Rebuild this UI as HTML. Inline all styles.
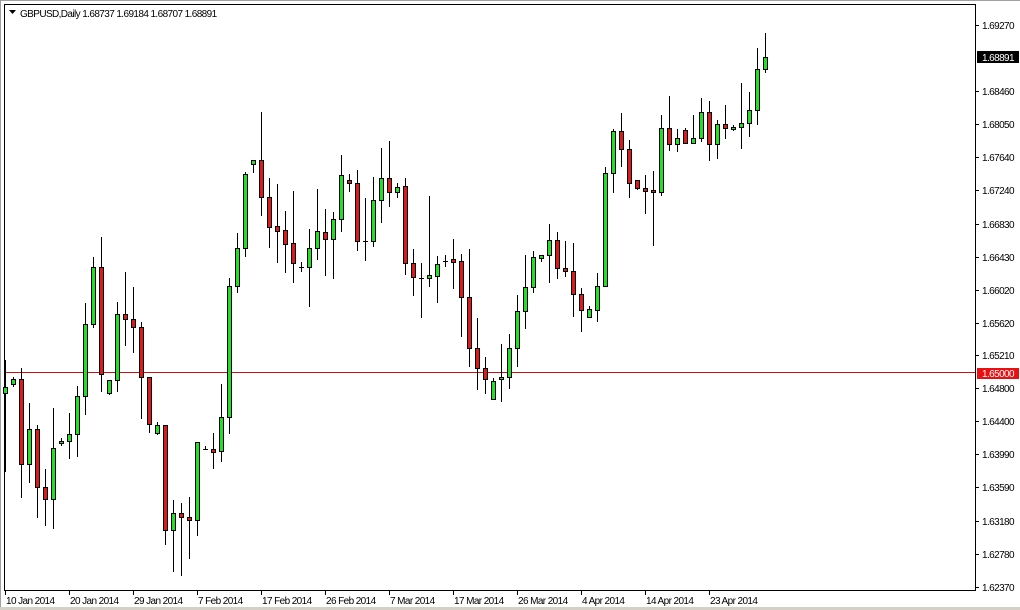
<!DOCTYPE html>
<html><head><meta charset="utf-8"><style>
html,body{margin:0;padding:0;background:#fff;width:1020px;height:610px;overflow:hidden}
svg{display:block}
text{font-family:"Liberation Sans","DejaVu Sans",sans-serif;font-size:10px;fill:#000;letter-spacing:-0.6px}
</style></head><body>
<svg width="1020" height="610" viewBox="0 0 1020 610" xmlns="http://www.w3.org/2000/svg" shape-rendering="crispEdges">
<rect x="0" y="0" width="1020" height="610" fill="#fff"/>
<rect x="0" y="0" width="1020" height="1" fill="#a0a0a0"/>
<rect x="0" y="0" width="1" height="610" fill="#a0a0a0"/>
<rect x="0" y="607" width="1020" height="3" fill="#d4d0c8"/>
<rect x="4.5" y="4.5" width="971" height="586" fill="none" stroke="#000"/>
<path d="M9 10h7l-3.5 4z" fill="#000" shape-rendering="auto"/>
<text x="20" y="17">GBPUSD,Daily  1.68737 1.69184 1.68707 1.68891</text>
<line x1="5" y1="372.5" x2="975" y2="372.5" stroke="#d01010"/>
<g stroke="#000" fill="none">
<path d="M5.5 360V472M13.5 377V387M21.5 368V498M29.5 403V483M37.5 425V518M45.5 469V526M53.5 408V529M61.5 438V446M69.5 413V459M77.5 386V457M85.5 303V415M93.5 257V328M101.5 237V392M109.5 380V395M117.5 302V392M125.5 272V346M133.5 287V353M141.5 322V419M149.5 377V433M157.5 422V435M165.5 425V545M173.5 500V572M181.5 503V576M189.5 497V559M197.5 442V536M205.5 446V449M213.5 433V469M221.5 384V462M229.5 278V434M237.5 233V293M245.5 172V257M253.5 160V173M261.5 112V216M269.5 178V248M277.5 184V263M285.5 211V273M293.5 191V283M301.5 262V272M309.5 229V307M317.5 189V260M325.5 209V276M333.5 212V279M341.5 155V232M349.5 174V192M357.5 170V251M365.5 198V261M373.5 177V247M381.5 148V223M389.5 141V207M397.5 183V198M405.5 178V275M413.5 249V296M421.5 263V318M429.5 196V287M437.5 256V303M445.5 255V267M453.5 239V289M461.5 254V337M469.5 249V367M477.5 318V390M485.5 357V394M493.5 378V399M501.5 344V402M509.5 334V389M517.5 295V367M525.5 255V329M533.5 251V293M541.5 255V262M549.5 224V283M557.5 232V279M565.5 241V277M573.5 243V317M581.5 288V332M589.5 306V318M597.5 273V322M605.5 167V286M613.5 129V193M621.5 113V167M629.5 140V198M637.5 180V190M645.5 175V214M653.5 171V246M661.5 115V196M669.5 96V151M677.5 129V152M685.5 128V144M693.5 115V143M701.5 98V142M709.5 101V161M717.5 120V159M725.5 105V139M733.5 125V131M741.5 83V149M749.5 92V137M757.5 48V125M765.5 33V73"/>
<path d="M203 449.5h5M299 267.5h5M363 241.5h5M419 278.5h5M443 261.5h5"/>
</g>
<g stroke="#000" fill="#22e022">
<rect x="3.5" y="387.5" width="4" height="6"/>
<rect x="11.5" y="379.5" width="4" height="5"/>
<rect x="27.5" y="429.5" width="4" height="35"/>
<rect x="51.5" y="448.5" width="4" height="51"/>
<rect x="59.5" y="441.5" width="4" height="2"/>
<rect x="67.5" y="434.5" width="4" height="7"/>
<rect x="75.5" y="396.5" width="4" height="38"/>
<rect x="83.5" y="324.5" width="4" height="72"/>
<rect x="91.5" y="267.5" width="4" height="57"/>
<rect x="107.5" y="380.5" width="4" height="13"/>
<rect x="115.5" y="314.5" width="4" height="66"/>
<rect x="155.5" y="425.5" width="4" height="8"/>
<rect x="171.5" y="513.5" width="4" height="17"/>
<rect x="195.5" y="442.5" width="4" height="78"/>
<rect x="219.5" y="417.5" width="4" height="34"/>
<rect x="227.5" y="286.5" width="4" height="131"/>
<rect x="235.5" y="248.5" width="4" height="38"/>
<rect x="243.5" y="174.5" width="4" height="74"/>
<rect x="251.5" y="160.5" width="4" height="4"/>
<rect x="307.5" y="248.5" width="4" height="19"/>
<rect x="315.5" y="231.5" width="4" height="17"/>
<rect x="331.5" y="219.5" width="4" height="20"/>
<rect x="339.5" y="175.5" width="4" height="44"/>
<rect x="371.5" y="200.5" width="4" height="41"/>
<rect x="379.5" y="178.5" width="4" height="22"/>
<rect x="395.5" y="187.5" width="4" height="5"/>
<rect x="427.5" y="275.5" width="4" height="3"/>
<rect x="435.5" y="264.5" width="4" height="12"/>
<rect x="491.5" y="381.5" width="4" height="18"/>
<rect x="499.5" y="377.5" width="4" height="2"/>
<rect x="507.5" y="348.5" width="4" height="29"/>
<rect x="515.5" y="311.5" width="4" height="37"/>
<rect x="523.5" y="287.5" width="4" height="24"/>
<rect x="531.5" y="257.5" width="4" height="30"/>
<rect x="539.5" y="255.5" width="4" height="3"/>
<rect x="547.5" y="240.5" width="4" height="15"/>
<rect x="587.5" y="309.5" width="4" height="8"/>
<rect x="595.5" y="286.5" width="4" height="24"/>
<rect x="603.5" y="173.5" width="4" height="113"/>
<rect x="611.5" y="131.5" width="4" height="42"/>
<rect x="659.5" y="128.5" width="4" height="64"/>
<rect x="675.5" y="138.5" width="4" height="6"/>
<rect x="691.5" y="138.5" width="4" height="5"/>
<rect x="699.5" y="112.5" width="4" height="26"/>
<rect x="715.5" y="124.5" width="4" height="20"/>
<rect x="731.5" y="127.5" width="4" height="2"/>
<rect x="739.5" y="123.5" width="4" height="4"/>
<rect x="747.5" y="110.5" width="4" height="13"/>
<rect x="755.5" y="69.5" width="4" height="41"/>
<rect x="763.5" y="57.5" width="4" height="12"/>
</g>
<g stroke="#000" fill="#dd1a1a">
<rect x="19.5" y="379.5" width="4" height="85"/>
<rect x="35.5" y="429.5" width="4" height="58"/>
<rect x="43.5" y="487.5" width="4" height="12"/>
<rect x="99.5" y="267.5" width="4" height="107"/>
<rect x="123.5" y="314.5" width="4" height="5"/>
<rect x="131.5" y="319.5" width="4" height="8"/>
<rect x="139.5" y="327.5" width="4" height="50"/>
<rect x="147.5" y="377.5" width="4" height="47"/>
<rect x="163.5" y="425.5" width="4" height="105"/>
<rect x="179.5" y="513.5" width="4" height="4"/>
<rect x="187.5" y="517.5" width="4" height="3"/>
<rect x="211.5" y="449.5" width="4" height="3"/>
<rect x="259.5" y="160.5" width="4" height="37"/>
<rect x="267.5" y="197.5" width="4" height="30"/>
<rect x="275.5" y="226.5" width="4" height="5"/>
<rect x="283.5" y="230.5" width="4" height="14"/>
<rect x="291.5" y="243.5" width="4" height="20"/>
<rect x="323.5" y="232.5" width="4" height="7"/>
<rect x="347.5" y="180.5" width="4" height="3"/>
<rect x="355.5" y="183.5" width="4" height="58"/>
<rect x="387.5" y="178.5" width="4" height="14"/>
<rect x="403.5" y="186.5" width="4" height="77"/>
<rect x="411.5" y="263.5" width="4" height="14"/>
<rect x="451.5" y="259.5" width="4" height="3"/>
<rect x="459.5" y="261.5" width="4" height="36"/>
<rect x="467.5" y="297.5" width="4" height="51"/>
<rect x="475.5" y="348.5" width="4" height="20"/>
<rect x="483.5" y="368.5" width="4" height="11"/>
<rect x="555.5" y="240.5" width="4" height="28"/>
<rect x="563.5" y="268.5" width="4" height="3"/>
<rect x="571.5" y="271.5" width="4" height="23"/>
<rect x="579.5" y="294.5" width="4" height="16"/>
<rect x="619.5" y="131.5" width="4" height="18"/>
<rect x="627.5" y="149.5" width="4" height="34"/>
<rect x="635.5" y="180.5" width="4" height="8"/>
<rect x="643.5" y="188.5" width="4" height="3"/>
<rect x="651.5" y="190.5" width="4" height="2"/>
<rect x="667.5" y="128.5" width="4" height="16"/>
<rect x="683.5" y="130.5" width="4" height="13"/>
<rect x="707.5" y="112.5" width="4" height="32"/>
<rect x="723.5" y="124.5" width="4" height="4"/>
</g>
<g stroke="#000">
<path d="M976 25.5h3M976 91.5h3M976 124.5h3M976 157.5h3M976 190.5h3M976 224.5h3M976 257.5h3M976 290.5h3M976 323.5h3M976 355.5h3M976 388.5h3M976 421.5h3M976 454.5h3M976 487.5h3M976 521.5h3M976 554.5h3M976 587.5h3"/>
<path d="M5.5 591v4M69.5 591v4M133.5 591v4M197.5 591v4M261.5 591v4M325.5 591v4M389.5 591v4M453.5 591v4M517.5 591v4M581.5 591v4M645.5 591v4M709.5 591v4"/>
</g>
<rect x="977" y="51" width="42" height="12" fill="#000"/>
<rect x="977" y="368" width="42" height="11" fill="#e81010"/>
<g>
<text x="982" y="29">1.69270</text>
<text x="982" y="61" style="fill:#fff">1.68891</text>
<text x="982" y="95">1.68460</text>
<text x="982" y="128">1.68050</text>
<text x="982" y="161">1.67640</text>
<text x="982" y="194">1.67240</text>
<text x="982" y="228">1.66830</text>
<text x="982" y="261">1.66430</text>
<text x="982" y="294">1.66020</text>
<text x="982" y="327">1.65620</text>
<text x="982" y="359">1.65210</text>
<text x="982" y="377" style="fill:#fff">1.65000</text>
<text x="982" y="392">1.64800</text>
<text x="982" y="425">1.64400</text>
<text x="982" y="458">1.63990</text>
<text x="982" y="491">1.63590</text>
<text x="982" y="525">1.63180</text>
<text x="982" y="558">1.62780</text>
<text x="982" y="591">1.62370</text>
</g>
<g>
<text x="6" y="604">10 Jan 2014</text>
<text x="70" y="604">20 Jan 2014</text>
<text x="134" y="604">29 Jan 2014</text>
<text x="198" y="604">7 Feb 2014</text>
<text x="262" y="604">17 Feb 2014</text>
<text x="326" y="604">26 Feb 2014</text>
<text x="390" y="604">7 Mar 2014</text>
<text x="454" y="604">17 Mar 2014</text>
<text x="518" y="604">26 Mar 2014</text>
<text x="582" y="604">4 Apr 2014</text>
<text x="646" y="604">14 Apr 2014</text>
<text x="710" y="604">23 Apr 2014</text>
</g>
</svg>
</body></html>
